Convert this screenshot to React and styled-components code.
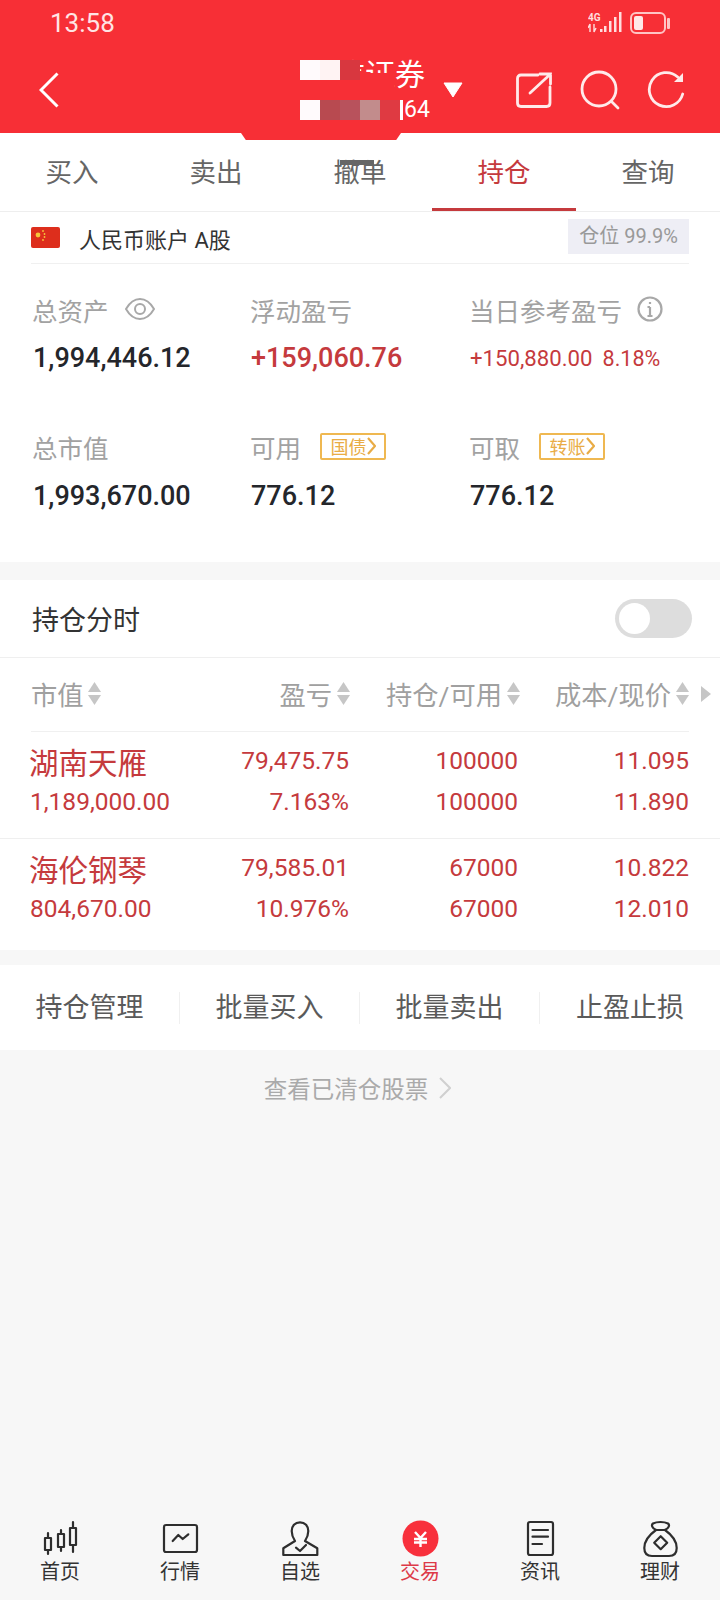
import React from 'react'
import styled, { createGlobalStyle } from 'styled-components'

const RED = '#f72f36'
const UP = '#c53a3d'
const PAGE_BG = '#f7f7f7'

const GlobalStyle = createGlobalStyle`
  html, body { margin: 0; padding: 0; background: ${PAGE_BG}; }
  * { box-sizing: border-box; }
  body { font-family: Roboto, "Noto Sans CJK SC", sans-serif; }
`

const Page = styled.div`
  width: 720px;
  height: 1600px;
  display: flex;
  flex-direction: column;
  overflow: hidden;
  background: ${PAGE_BG};
`

const Header = styled.header`
  position: relative;
  height: 133px;
  flex: none;
  background: ${RED};
  color: #fff;
  padding: 12px 0 0 50px;
`

const StatusRow = styled.div`
  display: flex;
  justify-content: space-between;
  align-items: flex-start;
  height: 22px;
`

const Clock = styled.span`
  font-size: 26px;
  line-height: 22px;
  color: #ffe4e4;
`

const StatusIcons = styled.div`
  display: flex;
  align-items: center;
  gap: 8px;
  padding-right: 50px;
`

const NavRow = styled.div`
  display: flex;
  align-items: center;
  height: 38px;
  margin: 37px 0 0 -11px;
`

const TitleBlock = styled.div`
  position: relative;
  width: 130px;
  height: 74px;
  margin: 8px 0 0 241px;
  flex: none;
`

const TitleText = styled.div`
  font-size: 30px;
  line-height: 36px;
  margin-left: 35px;
  white-space: nowrap;
`

const AccountTail = styled.div`
  position: absolute;
  left: 104px;
  top: 41px;
  font-size: 23px;
  line-height: 24px;
`

const MaskRow = styled.div`
  position: absolute;
  left: ${p => p.$left || 0}px;
  top: ${p => p.$top}px;
  display: flex;
`

const MaskCell = styled.i`
  display: block;
  width: ${p => p.$w || 20}px;
  height: ${p => p.$h || 20}px;
  background: ${p => p.$c};
`

const Caret = styled.svg`
  flex: none;
  margin: 0 0 0 13px;
`

const HeaderActions = styled.div`
  display: flex;
  align-items: center;
  margin-left: 53px;
  gap: 27px;
`

const Notch = styled.div`
  position: absolute;
  left: 241px;
  top: 133px;
  width: 160px;
  height: 7px;
  background: ${RED};
  clip-path: polygon(0 0, 100% 0, 97% 100%, 3% 100%);
`

const Tabs = styled.nav`
  display: flex;
  flex: none;
  height: 79px;
  background: #fff;
  border-bottom: 1px solid #eeeeee;
`

const Tab = styled.div`
  position: relative;
  width: 144px;
  font-size: 26.5px;
  line-height: 80px;
  text-align: center;
  color: ${p => (p.$active ? UP : '#666')};
  ${p => p.$active && `box-shadow: inset 0 -3px 0 ${UP};`}
`

const Smudge = styled.i`
  position: absolute;
  left: 52px;
  top: 27px;
  width: 34px;
  height: 5px;
  background: #666;
`

const AccountSection = styled.section`
  background: #fff;
  flex: none;
  padding: 0 31px;
`

const AccountRow = styled.div`
  display: flex;
  align-items: center;
  height: 52px;
  border-bottom: 1px solid #f0f0f0;
`

const AccountName = styled.span`
  margin-left: 19px;
  font-size: 22px;
  color: #333;
`

const PositionTag = styled.span`
  margin-left: auto;
  margin-top: -3px;
  width: 121px;
  height: 35px;
  background: #eeeef5;
  font-size: 20px;
  line-height: 34px;
  text-align: center;
  color: #999;
`

const Summary = styled.section`
  flex: none;
  height: 298px;
  background: #fff;
  padding: 28px 0 0 33px;
  display: grid;
  grid-template-columns: 218px 219px 1fr;
  grid-template-rows: 86px 87px;
  row-gap: 51px;
`

const Stat = styled.div`
  display: flex;
  flex-direction: column;
  gap: ${p => p.$gap}px;
`

const StatLabel = styled.div`
  display: flex;
  align-items: center;
  height: 34px;
  margin-left: -1px;
  font-size: 25.5px;
  color: #a2a2a2;
`

const StatValue = styled.div`
  display: flex;
  align-items: center;
  gap: 10px;
  height: 40px;
  font-size: ${p => p.$size || 27}px;
  font-weight: ${p => (p.$size ? 400 : 500)};
  color: ${p => (p.$up ? UP : '#24262b')};
`

const Percent = styled.span`
  font-size: 21.5px;
`

const LabelIcon = styled.svg`
  flex: none;
  margin-left: ${p => p.$gap}px;
`

const LinkTag = styled.span`
  display: flex;
  align-items: center;
  justify-content: center;
  width: 66px;
  height: 27px;
  margin-left: 19px;
  border: 2px solid #efb851;
  border-radius: 2px;
  font-size: 18px;
  color: #e9ac45;
`

const Gap = styled.div`
  flex: none;
  height: ${p => p.$h}px;
`

const Holdings = styled.section`
  flex: none;
  background: #fff;
`

const ToggleRow = styled.div`
  display: flex;
  align-items: center;
  justify-content: space-between;
  height: 78px;
  padding: 0 28px 0 32px;
  border-bottom: 1px solid #efefef;
  font-size: 27px;
  color: #333;
`

const Toggle = styled.div`
  width: 77px;
  height: 39px;
  padding: 4px;
  border-radius: 20px;
  background: #dddddd;
`

const Knob = styled.div`
  width: 31px;
  height: 31px;
  border-radius: 50%;
  background: #fff;
`

const TableHead = styled.div`
  position: relative;
  margin: 0 31px;
  height: 74px;
  padding-bottom: 3px;
  border-bottom: 1px solid #f0f0f0;
  display: grid;
  grid-template-columns: 180px 139px 170px 1fr;
  align-items: center;
  font-size: 26.3px;
  color: #a0a0a0;
`

const HeadCell = styled.div`
  display: flex;
  align-items: center;
  justify-content: ${p => (p.$left ? 'flex-start' : 'flex-end')};
  gap: ${p => (p.$wide ? 4 : 5)}px;
`

const MoreArrow = styled.svg`
  position: absolute;
  right: -22px;
  top: 28px;
`

const StockRow = styled.div`
  height: ${p => p.$h}px;
  padding: 8px 31px 0 30px;
  border-bottom: ${p => (p.$last ? 'none' : '1px solid #efefef')};
  display: grid;
  grid-template-columns: 181px 138px 169px 1fr;
  grid-template-rows: 41px 41px;
  align-items: center;
  font-size: 24.5px;
  color: ${UP};
`

const StockName = styled.div`
  font-size: 29.5px;
  margin-left: -1px;
`

const StockNum = styled.div`
  text-align: ${p => (p.$left ? 'left' : 'right')};
  white-space: nowrap;
`

const ActionBar = styled.div`
  flex: none;
  height: 85px;
  background: #fff;
  display: grid;
  grid-template-columns: repeat(4, 180px);
  align-items: center;
`

const Action = styled.div`
  height: 32px;
  line-height: 32px;
  text-align: center;
  font-size: 27px;
  color: #5a5a5a;
  border-right: ${p => (p.$last ? 'none' : '1px solid #f0f0f0')};
`

const ClearedLink = styled.div`
  flex: none;
  display: flex;
  align-items: center;
  justify-content: center;
  gap: 11px;
  height: 76px;
  font-size: 23.5px;
  color: #aaa;
  padding-right: 5px;
`

const Spacer = styled.div`
  flex: 1;
`

const BottomNav = styled.nav`
  flex: none;
  display: grid;
  grid-template-columns: repeat(6, 120px);
  height: 90px;
  padding-top: 8px;
`

const NavItem = styled.div`
  display: flex;
  flex-direction: column;
  align-items: center;
  gap: 2px;
  font-size: 20px;
  line-height: 24px;
  color: ${p => (p.$active ? '#dd3a48' : '#333')};
`

const Sort = () => (
  <svg width="13" height="23" viewBox="0 0 13 23" fill="#c6c6c6">
    <path d="M6.5 0 L13 10 H0 Z" />
    <path d="M0 13 H13 L6.5 23 Z" />
  </svg>
)

const Chevron = () => (
  <svg width="12" height="24" viewBox="0 0 12 24" fill="none" stroke="#d0d0d0" strokeWidth="2">
    <path d="M1 2 L11 12 L1 22" />
  </svg>
)

const TagArrow = () => (
  <svg width="9" height="18" viewBox="0 0 9 18" fill="none" stroke="#e9ac45" strokeWidth="2.2">
    <path d="M1 1 L8 9 L1 17" />
  </svg>
)

const NavIcon = ({ name }) => {
  const line = { fill: 'none', stroke: '#2e2e2e', strokeWidth: 2.2, strokeLinejoin: 'round', strokeLinecap: 'round' }
  if (name === 'home') {
    return (
      <svg width="40" height="40" viewBox="0 0 40 40" {...line}>
        <path d="M8 15 V36 M21 12 V33 M33 4 V34" />
        <rect x="5" y="20" width="6" height="12" fill={PAGE_BG} />
        <rect x="18" y="16" width="6" height="13" fill={PAGE_BG} />
        <rect x="30" y="10" width="6" height="17" fill={PAGE_BG} />
      </svg>
    )
  }
  if (name === 'market') {
    return (
      <svg width="40" height="40" viewBox="0 0 40 40" {...line}>
        <rect x="4" y="7" width="33" height="27" rx="2" />
        <path d="M12.7 23 L18.3 17 L22.7 21 L28.3 16.3" />
      </svg>
    )
  }
  if (name === 'watch') {
    return (
      <svg width="40" height="40" viewBox="0 0 40 40" {...line}>
        <path d="M3.300 37 V30.300 L15 23 C13 20 11.700 17 11.700 13 C11.700 8 15 4.300 20 4.300 C25 4.300 28.300 8 28.300 13 C28.300 17 27 20 25 23 L37.300 30.300 V37 Z" />
        <path d="M16 29.700 L20 33 L26 27" />
      </svg>
    )
  }
  if (name === 'trade') {
    return (
      <svg width="40" height="40" viewBox="0 0 40 40">
        <circle cx="20.500" cy="20.500" r="18" fill="#f8303c" />
        <path d="M15 14 L20.500 20 L26 14 M14 21 H27 M14 24.500 H27 M20.500 20 V29" fill="none" stroke="#fff" strokeWidth="2.400" />
      </svg>
    )
  }
  if (name === 'news') {
    return (
      <svg width="40" height="40" viewBox="0 0 40 40" {...line}>
        <rect x="8" y="4" width="25" height="33" rx="2" />
        <path d="M12.500 12 H28 M12.500 18.700 H28 M12.500 26 H22" />
      </svg>
    )
  }
  return (
    <svg width="40" height="40" viewBox="0 0 40 40" {...line}>
      <path d="M16 12 C12 10 11 7 13 5.500 C17 3.500 24 3.500 28 5.500 C30 7 29 10 25 12 Z" />
      <path d="M16 12 C9 17 4.300 23 4.300 30 C4.300 35 7 38 12 38 H29 C34 38 36.700 35 36.700 30 C36.700 23 32 17 25 12" />
      <path d="M20.700 18.200 L27.200 24.700 L20.700 31.200 L14.200 24.700 Z" />
    </svg>
  )
}

const tabs = ['买入', '卖出', '撤单', '持仓', '查询']

const stocks = [
  { name: '湖南天雁', value: '1,189,000.00', pl: '79,475.75', rate: '7.163%', qty: '100000', cost: '11.095', price: '11.890', h: 107 },
  { name: '海伦钢琴', value: '804,670.00', pl: '79,585.01', rate: '10.976%', qty: '67000', cost: '10.822', price: '12.010', h: 111, last: true },
]

const navItems = [
  { id: 'home', label: '首页' },
  { id: 'market', label: '行情' },
  { id: 'watch', label: '自选' },
  { id: 'trade', label: '交易', active: true },
  { id: 'news', label: '资讯' },
  { id: 'wealth', label: '理财' },
]

function App() {
  return (
    <Page>
      <GlobalStyle />
      <Header>
        <StatusRow>
          <Clock>13:58</Clock>
          <StatusIcons>
            <svg width="34" height="22" viewBox="0 0 34 22" fill="#ffdede">
              <text x="0" y="9" fontSize="10" fontWeight="700" fontFamily="Roboto, sans-serif">4G</text>
              <path d="M2 12 V20 M0 16 L2 12 M6 12 V20 L8 16" fill="none" stroke="#ffdede" strokeWidth="1.400" />
              <rect x="12" y="17" width="2.500" height="3" />
              <rect x="16" y="14" width="2.500" height="6" />
              <rect x="21" y="9" width="2.500" height="11" />
              <rect x="26" y="5" width="2.500" height="15" />
              <rect x="31" y="0" width="2.500" height="20" />
            </svg>
            <svg width="40" height="22" viewBox="0 0 40 22">
              <rect x="1" y="1" width="34" height="20" rx="5" fill="none" stroke="#ffc4c4" strokeWidth="2" />
              <rect x="4" y="4" width="9" height="14" rx="2" fill="#ffe8e8" />
              <rect x="37" y="6" width="3" height="11" rx="1" fill="#ffc4c4" />
            </svg>
          </StatusIcons>
        </StatusRow>
        <NavRow>
          <svg width="20" height="36" viewBox="0 0 20 36" fill="none" stroke="#fff" strokeWidth="3">
            <path d="M18.500 1.500 L2 18 L18.500 34.500" />
          </svg>
          <TitleBlock>
            <TitleText>信证券</TitleText>
            <MaskRow $left={35} $top={23}>
              <MaskCell $w={59} $h={14} $c={RED} />
            </MaskRow>
            <MaskRow $left={60} $top={16}>
              <MaskCell $w={34} $h={8} $c={RED} />
            </MaskRow>
            <MaskRow $top={3}>
              <MaskCell $c="#fffafc" />
              <MaskCell $c="#fff3f3" />
              <MaskCell $c="#d8373f" />
            </MaskRow>
            <AccountTail>64</AccountTail>
            <MaskRow $top={43}>
              <MaskCell $c="#fffafc" />
              <MaskCell $c="#b84a50" />
              <MaskCell $c="#b8525c" />
              <MaskCell $c="#c28c8c" />
              <MaskCell $c="#df3a42" />
              <MaskCell $w={3} $c="#fff" />
            </MaskRow>
          </TitleBlock>
          <Caret width="20" height="16" viewBox="0 0 20 16">
            <path d="M1 1 H19 L10 15 Z" fill="#fff" stroke="#fff" strokeLinejoin="round" />
          </Caret>
          <HeaderActions>
            <svg width="37" height="36" viewBox="0 0 37 36" fill="none" stroke="#ffeaea" strokeWidth="2.800" strokeLinecap="round">
              <path d="M22 3 H5 Q1.500 3 1.500 6.500 V31 Q1.500 34.500 5 34.500 H30.500 Q34 34.500 34 31 V15" />
              <path d="M14 21 L34.500 2 M24 2 H34.500 V12" />
            </svg>
            <svg width="40" height="40" viewBox="0 0 40 40" fill="none" stroke="#ffeaea" strokeWidth="2.800" strokeLinecap="round">
              <circle cx="19" cy="19" r="17" />
              <path d="M32 32 L38 38" />
            </svg>
            <svg width="40" height="40" viewBox="0 0 40 40" fill="none" stroke="#ffeaea" strokeWidth="2.800" strokeLinecap="round">
              <path d="M35.700 24 A17 17 0 1 1 30.700 7" />
              <path d="M36 3 V12 H27 Z" fill="#ffeaea" stroke="none" />
            </svg>
          </HeaderActions>
        </NavRow>
        <Notch />
      </Header>

      <Tabs>
        {tabs.map(t => (
          <Tab key={t} $active={t === '持仓'}>
            {t}
            {t === '撤单' && <Smudge />}
          </Tab>
        ))}
      </Tabs>

      <AccountSection>
        <AccountRow>
          <svg width="29" height="21" viewBox="0 0 29 21">
            <rect width="29" height="21" rx="2" fill="#dd2e1c" />
            <circle cx="7" cy="8" r="2.400" fill="#f6c53a" />
            <circle cx="12" cy="4" r="0.900" fill="#f6c53a" />
            <circle cx="13.500" cy="7" r="0.900" fill="#f6c53a" />
            <circle cx="13.500" cy="10" r="0.900" fill="#f6c53a" />
            <circle cx="12" cy="13" r="0.900" fill="#f6c53a" />
          </svg>
          <AccountName>人民币账户 A股</AccountName>
          <PositionTag>仓位 99.9%</PositionTag>
        </AccountRow>
      </AccountSection>

      <Summary>
        <Stat $gap={12}>
          <StatLabel>
            总资产
            <LabelIcon $gap={16} width="30" height="22" viewBox="0 0 30 22" fill="none" stroke="#a8a8a8" strokeWidth="2">
              <path d="M1 11 C5 4 10 1 15 1 C20 1 25 4 29 11 C25 18 20 21 15 21 C10 21 5 18 1 11 Z" />
              <circle cx="15" cy="11" r="5" />
            </LabelIcon>
          </StatLabel>
          <StatValue>1,994,446.12</StatValue>
        </Stat>
        <Stat $gap={12}>
          <StatLabel>浮动盈亏</StatLabel>
          <StatValue $up>+159,060.76</StatValue>
        </Stat>
        <Stat $gap={12}>
          <StatLabel>
            当日参考盈亏
            <LabelIcon $gap={15} width="26" height="26" viewBox="0 0 26 26" fill="none" stroke="#a8a8a8" strokeWidth="2.200">
              <circle cx="13" cy="13" r="11.500" />
              <path d="M13 11 V20 M10.500 11 H13 M10.500 20 H15.500 M13 6 V8" />
            </LabelIcon>
          </StatLabel>
          <StatValue $up $size={22.2}>
            +150,880.00
            <Percent>8.18%</Percent>
          </StatValue>
        </Stat>
        <Stat $gap={13}>
          <StatLabel>总市值</StatLabel>
          <StatValue>1,993,670.00</StatValue>
        </Stat>
        <Stat $gap={13}>
          <StatLabel>
            可用
            <LinkTag>国债<TagArrow /></LinkTag>
          </StatLabel>
          <StatValue>776.12</StatValue>
        </Stat>
        <Stat $gap={13}>
          <StatLabel>
            可取
            <LinkTag>转账<TagArrow /></LinkTag>
          </StatLabel>
          <StatValue>776.12</StatValue>
        </Stat>
      </Summary>

      <Gap $h={18} />

      <Holdings>
        <ToggleRow>
          持仓分时
          <Toggle><Knob /></Toggle>
        </ToggleRow>
        <TableHead>
          <HeadCell $left $wide>市值<Sort /></HeadCell>
          <HeadCell>盈亏<Sort /></HeadCell>
          <HeadCell>持仓/可用<Sort /></HeadCell>
          <HeadCell>成本/现价<Sort /></HeadCell>
          <MoreArrow width="10" height="16" viewBox="0 0 10 16" fill="#c6c6c6">
            <path d="M0 0 L10 8 L0 16 Z" />
          </MoreArrow>
        </TableHead>
        {stocks.map(s => (
          <StockRow key={s.name} $h={s.h} $last={s.last}>
            <StockName>{s.name}</StockName>
            <StockNum>{s.pl}</StockNum>
            <StockNum>{s.qty}</StockNum>
            <StockNum>{s.cost}</StockNum>
            <StockNum $left>{s.value}</StockNum>
            <StockNum>{s.rate}</StockNum>
            <StockNum>{s.qty}</StockNum>
            <StockNum>{s.price}</StockNum>
          </StockRow>
        ))}
      </Holdings>

      <Gap $h={15} />

      <ActionBar>
        <Action>持仓管理</Action>
        <Action>批量买入</Action>
        <Action>批量卖出</Action>
        <Action $last>止盈止损</Action>
      </ActionBar>

      <ClearedLink>
        查看已清仓股票
        <Chevron />
      </ClearedLink>

      <Spacer />

      <BottomNav>
        {navItems.map(n => (
          <NavItem key={n.id} $active={n.active}>
            <NavIcon name={n.id} />
            {n.label}
          </NavItem>
        ))}
      </BottomNav>
    </Page>
  )
}

export default App
